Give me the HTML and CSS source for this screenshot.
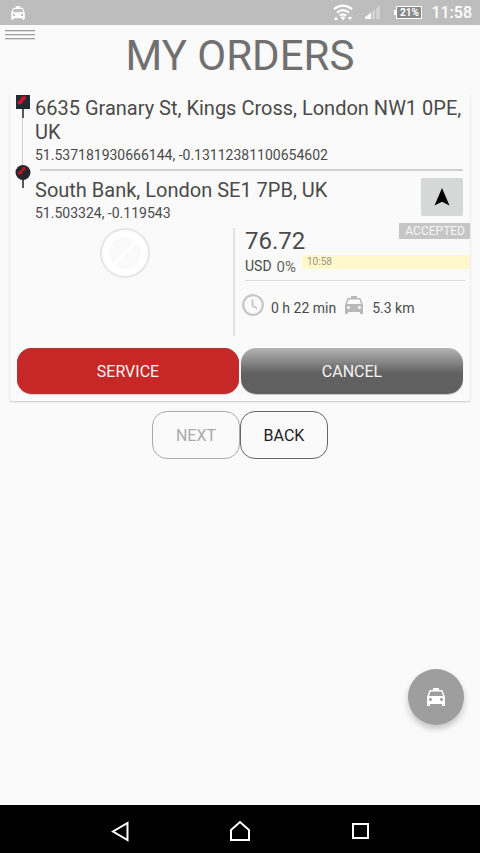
FILE: index.html
```html
<!DOCTYPE html>
<html lang="en">
<head>
<meta charset="utf-8">
<meta name="viewport" content="width=device-width, initial-scale=1">
<title>My Orders</title>
<link rel="stylesheet" href="styles.css">
</head>
<body>
<svg class="defs" aria-hidden="true">
  <symbol id="taxi" viewBox="0 0 24 24"><path d="M18.92 6.01C18.72 5.42 18.16 5 17.5 5H15V3H9v2H6.5c-.66 0-1.21.42-1.42 1.01L3 12v8c0 .55.45 1 1 1h1c.55 0 1-.45 1-1v-1h12v1c0 .55.45 1 1 1h1c.55 0 1-.45 1-1v-8l-2.08-5.99zM6.5 16c-.83 0-1.5-.67-1.5-1.5S5.67 13 6.5 13s1.5.67 1.5 1.5S7.33 16 6.5 16zm11 0c-.83 0-1.5-.67-1.5-1.5s.67-1.5 1.5-1.5 1.5.67 1.5 1.5-.67 1.5-1.5 1.5zM5 11l1.5-4.5h11L19 11H5z"/></symbol>
</svg>

<header class="status">
  <svg class="status-taxi"><use href="#taxi"/></svg>
  <div class="status-right">
    <svg class="wifi" viewBox="0 0 20 18">
      <g fill="none" stroke="#fff" stroke-width="2.2"><path d="M1 5.2Q10-1.8 19 5.2"/><path d="M4 8.6Q10 3.8 16 8.6"/><path d="M6.8 11.6Q10 9 13.2 11.6"/></g>
      <path fill="#fff" d="M7.6 13.2Q10 11.6 12.4 13.2L10 16.4zM3 12.5l2 3.5H1zM15 13h4l-2 3.500z"/>
    </svg>
    <svg class="signal" viewBox="0 0 15 15">
      <path fill="#fff" d="M0 14v-2l3-2v4zM3 14v-4l3-2.500V14z"/>
      <path fill="#d2d2d2" d="M7 14V7l3-3v10zM11 14V3.500l4-3V14z"/>
    </svg>
    <span class="battery">21%</span>
    <span class="clock">11:58</span>
  </div>
</header>

<main class="page">
  <button class="menu" type="button" aria-label="Menu"><span></span><span></span><span></span></button>
  <h1 class="title">MY ORDERS</h1>

  <article class="card">
    <section class="stop">
      <div class="rail">
        <svg class="pin" viewBox="0 0 16 24"><path d="M1 1h14v14H1z" fill="#202a33"/><path d="M8 14v10" stroke="#222" stroke-width="1.500"/><path d="M4.500 8.500l1.500-1M7.500 5l1.500-1" stroke="#d0142a" stroke-width="4" stroke-linecap="round"/></svg>
        <span class="track"></span>
      </div>
      <div class="stop-text">
        <p class="address">6635 Granary St, Kings Cross, London NW1 0PE, UK</p>
        <p class="coords">51.537181930666144, -0.13112381100654602</p>
      </div>
    </section>
    <section class="stop stop-end">
      <div class="rail">
        <svg class="pin" viewBox="0 0 16 24"><circle cx="8" cy="7.500" r="7.500" fill="#23282e"/><path d="M8 14v9" stroke="#222" stroke-width="1.500"/><path d="M4.500 8l1.500-1M8 4.500l1-1" stroke="#b51427" stroke-width="3.500" stroke-linecap="round"/></svg>
      </div>
      <div class="stop-body">
        <div class="stop-text">
          <p class="address">South Bank, London SE1 7PB, UK</p>
          <p class="coords">51.503324, -0.119543</p>
        </div>
        <button class="navigate" type="button" aria-label="Navigate"><svg viewBox="0 0 16 18"><path d="M8 0l7.500 17.500L8 13.800.500 17.500z"/></svg></button>
      </div>
    </section>

    <section class="details">
      <div class="avatar">
        <svg viewBox="0 0 50 50"><circle cx="25" cy="25" r="24" fill="#fff" stroke="#e6e6e6" stroke-width="2"/><circle cx="25" cy="25" r="16" fill="#fafafa"/><path d="M13 37L37 13" stroke="#fff" stroke-width="3"/></svg>
      </div>
      <div class="fare">
        <span class="badge">ACCEPTED</span>
        <p class="price">76.72</p>
        <div class="rate">
          <span class="currency">USD</span>
          <span class="percent">0%</span>
          <time class="time">10:58</time>
        </div>
        <div class="trip">
          <svg viewBox="0 0 24 24"><circle cx="12" cy="12" r="9.800" fill="none" stroke="#c6c6c6" stroke-width="2.200"/><path d="M11.500 6.500v6l4.500 3" fill="none" stroke="#c6c6c6" stroke-width="1.800"/></svg>
          <span>0 h 22 min</span>
          <svg class="trip-taxi"><use href="#taxi"/></svg>
          <span>5.3 km</span>
        </div>
      </div>
    </section>

    <div class="actions">
      <button class="action service" type="button">SERVICE</button>
      <button class="action cancel" type="button">CANCEL</button>
    </div>
  </article>

  <div class="pager">
    <button type="button" disabled>NEXT</button>
    <button type="button">BACK</button>
  </div>

  <button class="fab" type="button" aria-label="Taxi"><svg><use href="#taxi"/></svg></button>
</main>

<nav class="system">
  <button type="button" aria-label="Back"><svg viewBox="0 0 22 22"><path d="M18.500 3v17L4 11.500z"/></svg></button>
  <button type="button" aria-label="Home"><svg viewBox="0 0 22 22"><path d="M2 20V10l9-8 9 8v10z"/></svg></button>
  <button type="button" aria-label="Recent apps"><svg viewBox="0 0 22 22"><path d="M4 4h15v14H4z"/></svg></button>
</nav>
</body>
</html>
```
FILE: styles.css
```css
* { box-sizing: border-box; }

body {
  margin: 0;
  min-height: 100vh;
  display: flex;
  flex-direction: column;
  background: #fafafa;
  color: #4a4a4a;
  font-family: Roboto, "Noto Sans", sans-serif;
  font-size: 14px;
}

p, h1 { margin: 0; font-weight: 400; }
svg { display: block; flex: none; }

button {
  padding: 0;
  border: 0;
  background: none;
  color: inherit;
  font: inherit;
}

.defs { position: absolute; width: 0; height: 0; }

/* Status bar */
.status {
  display: flex;
  align-items: center;
  justify-content: space-between;
  height: 25px;
  padding: 0 8px 0 9px;
  background: #bdbdbd;
  color: #fff;
}
.status-taxi { width: 18px; height: 18px; fill: #fff; }
.status-right { display: flex; align-items: center; }
.wifi { width: 20px; height: 18px; margin-right: 12px; }
.signal { width: 15px; height: 15px; margin-right: 16px; }
.battery {
  position: relative;
  width: 26px;
  margin-right: 9px;
  border: 1px solid #fff;
  background: #8a8a8a;
  font-size: 10px;
  font-weight: 700;
  line-height: 11px;
  text-align: center;
}
.battery::before {
  content: "";
  position: absolute;
  left: -3px;
  top: 3px;
  width: 2px;
  height: 5px;
  background: #fff;
}
.clock { font-size: 16px; font-weight: 500; line-height: 24px; }

/* Page */
.page { flex: 1; position: relative; padding: 0 10px; }
.menu {
  position: absolute;
  left: 5px;
  top: 5px;
  width: 30px;
  display: grid;
  gap: 2px;
}
.menu span { height: 2px; border-top: 1px solid #a0a0a0; background: #dcdcdc; }
.title {
  padding-top: 7px;
  color: #707070;
  font-size: 42px;
  line-height: 48px;
  text-align: center;
}

/* Order card */
.card {
  margin-top: 13px;
  padding-bottom: 7px;
  border-radius: 2px;
  box-shadow: 0 1px 2px rgba(0, 0, 0, .2);
}
.stop { display: flex; }
.rail {
  display: flex;
  flex-direction: column;
  align-items: center;
  width: 25px;
  padding-top: 1px;
}
.pin { width: 16px; height: 24px; }
.track { flex: 1; width: 1px; background: #d0d0d0; }
.stop-text { flex: 1; padding-top: 3px; }
.address { font-size: 20px; line-height: 24px; }
.coords { margin-top: 1px; line-height: 20px; }
.stop-end { align-items: flex-start; }
.stop-end .rail { padding-top: 0; }
.stop-body {
  flex: 1;
  display: flex;
  margin: 4px 7px 0 0;
  padding-top: 6px;
  background: linear-gradient(#cfcfcf, #cfcfcf) 5px 0 / 100% 2px no-repeat;
}
.navigate {
  display: flex;
  align-items: center;
  justify-content: center;
  width: 42px;
  height: 38px;
  margin-top: 3px;
  border-radius: 2px;
  background: #d6d7d7;
}
.navigate svg { width: 16px; height: 18px; }

.details { display: flex; height: 108px; margin-top: 5px; }
.avatar {
  flex: 1;
  display: flex;
  justify-content: center;
  align-items: flex-start;
  padding-left: 6px;
}
.avatar svg { width: 50px; height: 50px; }
.fare {
  position: relative;
  width: calc(50% + 7px);
  padding-left: 10px;
  border-left: 2px solid #e2e2e2;
}
.badge {
  position: absolute;
  right: 0;
  top: -5px;
  padding: 0 5px 0 6px;
  background: #c6c6c6;
  color: #f6f6f6;
  font-size: 12px;
  line-height: 16px;
}
.price { font-size: 24px; line-height: 26px; }
.rate { display: flex; align-items: flex-start; height: 26px; line-height: 24px; }
.percent { margin: 0 6px 0 5px; color: #666; font-size: 15px; line-height: 26px; }
.time {
  flex: 1;
  margin-top: 1px;
  padding-left: 5px;
  background: #fff8cc;
  color: #9a9680;
  font-size: 10px;
  line-height: 14px;
}
.trip {
  display: flex;
  align-items: center;
  margin-right: 5px;
  padding-top: 12px;
  border-top: 1px solid #dcdcdc;
}
.trip svg { width: 24px; height: 24px; margin-left: -4px; margin-right: 6px; }
.trip .trip-taxi { margin-left: 6px; fill: #b8b8b8; }
.trip span { padding-top: 6px; }

.actions { display: flex; gap: 2px; margin: 12px 7px 0 7px; }
.action {
  flex: 1;
  height: 46px;
  border-radius: 15px;
  color: #f4f4f4;
  font-size: 16px;
}
.service {
  background: #c62828;
  box-shadow: inset 0 0 0 1px #b43433, 0 1px 1px rgba(198, 40, 40, .25);
}
.cancel {
  background: linear-gradient(#b5b5b5, #616161 55%, #606060);
  box-shadow: 0 1px 1px rgba(0, 0, 0, .2);
}

.pager { display: flex; justify-content: center; margin-top: 10px; }
.pager button {
  width: 88px;
  height: 48px;
  border: 1px solid #666;
  border-radius: 15px;
  color: #1c1c1c;
  font-size: 16px;
}
.pager button:disabled { border-color: #aaa; color: #aaa; }

.fab {
  position: absolute;
  right: 16px;
  bottom: 80px;
  display: flex;
  align-items: center;
  justify-content: center;
  width: 56px;
  height: 56px;
  border-radius: 50%;
  background: #9e9e9e;
  box-shadow: 0 4px 6px rgba(0, 0, 0, .22);
}
.fab svg { width: 24px; height: 24px; fill: #fff; }

/* System navigation */
.system {
  display: flex;
  justify-content: center;
  height: 48px;
  background: #000;
}
.system button {
  width: 25%;
  display: flex;
  align-items: center;
  justify-content: center;
  padding-top: 4px;
}
.system svg { width: 22px; height: 22px; fill: none; stroke: #fff; stroke-width: 2; }
```
